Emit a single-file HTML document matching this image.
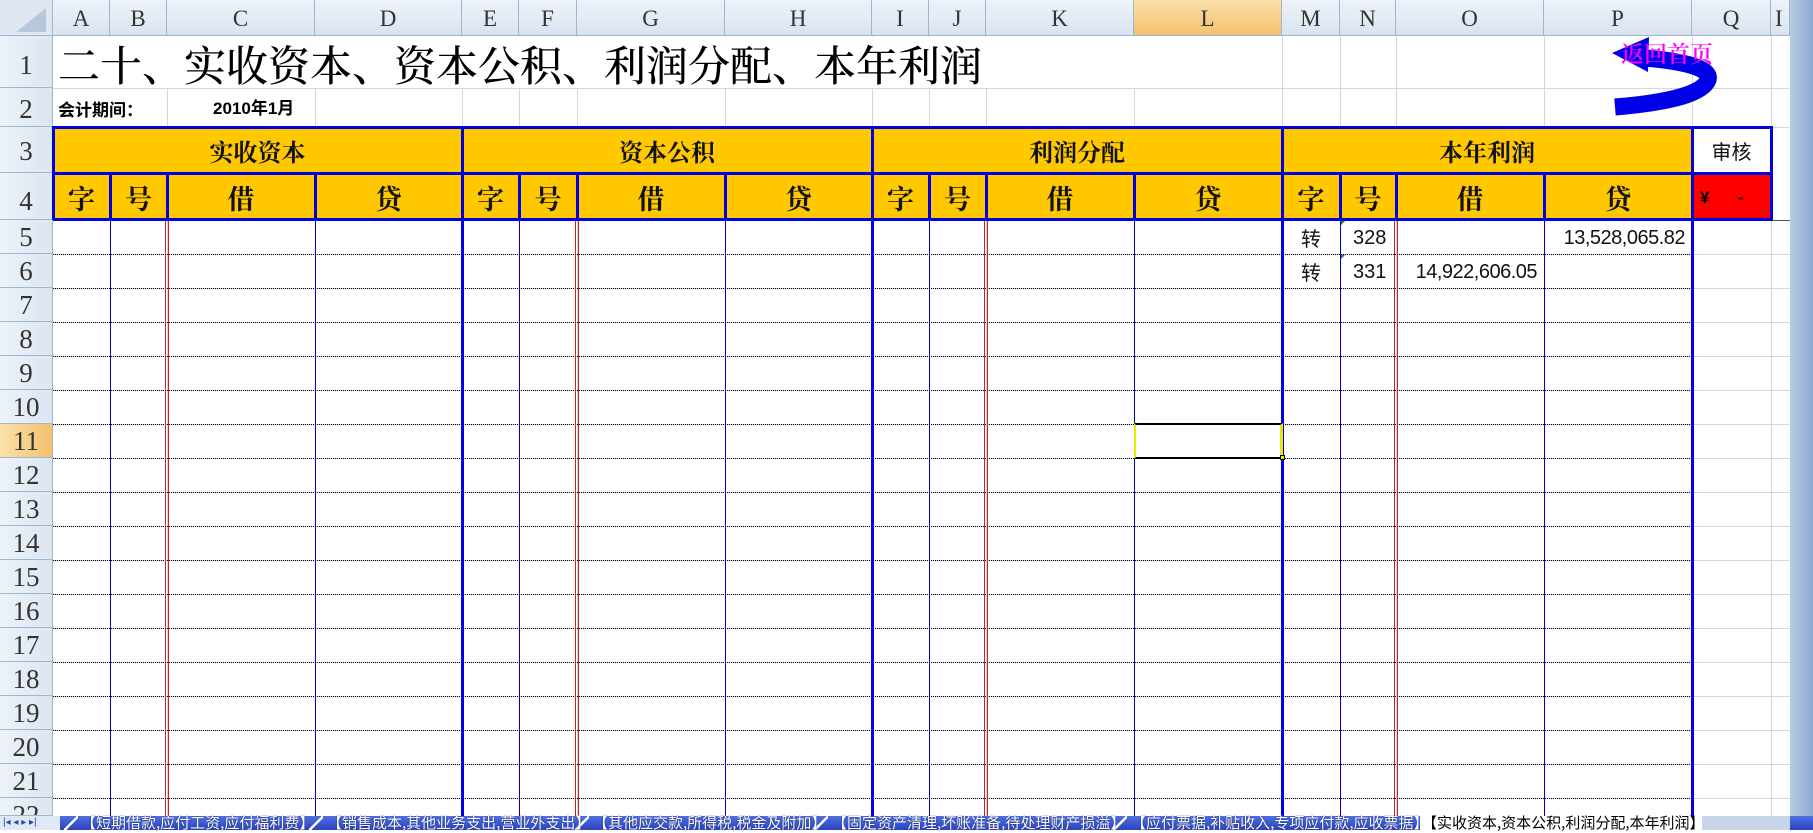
<!DOCTYPE html>
<html><head><meta charset="utf-8"><style>
*{margin:0;padding:0;box-sizing:border-box}
body{width:1813px;height:830px;overflow:hidden;background:#fff;position:relative;font-family:"Liberation Sans","Noto Sans CJK SC",sans-serif}
div{position:absolute}
.ch{top:0;height:36px;background:linear-gradient(#eef3fa,#d9e3f0);border-right:1px solid #9eb6ce;border-bottom:1px solid #9eb6ce;font-family:"Liberation Serif",serif;font-size:23px;color:#333;text-align:center;line-height:38px}
.rh{left:0;width:53px;background:linear-gradient(90deg,#eef3fa,#dbe5f1);border-right:1px solid #9eb6ce;border-bottom:1px solid #9eb6ce;font-family:"Liberation Serif",serif;font-size:27px;color:#333;text-align:center}
.gv{top:36px;height:780px;width:1px;background:#d0d7e5}
.gh{left:53px;width:1737px;height:1px;background:#d0d7e5}
.dh{left:53px;width:1639px;height:0;border-top:1px dotted #000}
.tb{width:1px;background:#0000c8;top:220px;height:596px}
.rd{width:4px;border-left:1px solid #d02020;border-right:1px solid #d02020;top:220px;height:596px}
.bb{background:#0000e0}
.y{background:#ffc800}
.h3{top:130px;height:42px;font-family:"Noto Serif CJK SC",serif;font-weight:700;font-size:24px;text-align:center;line-height:42px;color:#111}
.h4{top:176px;height:43px;font-family:"Noto Serif CJK SC",serif;font-weight:700;font-size:27px;text-align:center;line-height:43px;color:#111}
.n{font-size:20px;color:#111;height:34px;line-height:34px}
.tab{top:815px;height:15px;color:#fff;font-size:15px;line-height:15px;white-space:nowrap;font-family:"Noto Sans CJK SC",sans-serif;text-shadow:0 0 1px #002}
.sl{top:816px;width:14px;height:14px;background:linear-gradient(135deg,transparent 45%,#fff 45%,#fff 58%,transparent 58%)}
</style></head><body>
<div style="left:0;top:0;width:53px;height:36px;background:#dfe7f2;border-right:1px solid #9eb6ce;border-bottom:1px solid #9eb6ce"></div>
<div style="left:16px;top:8px;width:0;height:0;border-left:30px solid transparent;border-bottom:24px solid #b8c8dc"></div>
<div class="ch" style="left:53px;width:57px">A</div>
<div class="ch" style="left:110px;width:57px">B</div>
<div class="ch" style="left:167px;width:148px">C</div>
<div class="ch" style="left:315px;width:147px">D</div>
<div class="ch" style="left:462px;width:57px">E</div>
<div class="ch" style="left:519px;width:58px">F</div>
<div class="ch" style="left:577px;width:148px">G</div>
<div class="ch" style="left:725px;width:147px">H</div>
<div class="ch" style="left:872px;width:57px">I</div>
<div class="ch" style="left:929px;width:57px">J</div>
<div class="ch" style="left:986px;width:148px">K</div>
<div class="ch" style="left:1134px;width:148px;background:linear-gradient(#fbe0a8,#f4c170)">L</div>
<div class="ch" style="left:1282px;width:58px">M</div>
<div class="ch" style="left:1340px;width:56px">N</div>
<div class="ch" style="left:1396px;width:148px">O</div>
<div class="ch" style="left:1544px;width:148px">P</div>
<div class="ch" style="left:1692px;width:79px">Q</div>
<div class="ch" style="left:1771px;width:19px;text-align:left;padding-left:4px">I</div>
<div class="rh" style="top:36px;height:52px;line-height:58px">1</div>
<div class="rh" style="top:88px;height:39px;line-height:42px">2</div>
<div class="rh" style="top:127px;height:46px;line-height:48px">3</div>
<div class="rh" style="top:173px;height:47px;line-height:56px">4</div>
<div class="rh" style="top:220px;height:34px;line-height:34px">5</div>
<div class="rh" style="top:254px;height:34px;line-height:34px">6</div>
<div class="rh" style="top:288px;height:34px;line-height:34px">7</div>
<div class="rh" style="top:322px;height:34px;line-height:34px">8</div>
<div class="rh" style="top:356px;height:34px;line-height:34px">9</div>
<div class="rh" style="top:390px;height:34px;line-height:34px">10</div>
<div class="rh" style="top:424px;height:34px;line-height:34px;background:linear-gradient(90deg,#fbe0a8,#f4c170)">11</div>
<div class="rh" style="top:458px;height:34px;line-height:34px">12</div>
<div class="rh" style="top:492px;height:34px;line-height:34px">13</div>
<div class="rh" style="top:526px;height:34px;line-height:34px">14</div>
<div class="rh" style="top:560px;height:34px;line-height:34px">15</div>
<div class="rh" style="top:594px;height:34px;line-height:34px">16</div>
<div class="rh" style="top:628px;height:34px;line-height:34px">17</div>
<div class="rh" style="top:662px;height:34px;line-height:34px">18</div>
<div class="rh" style="top:696px;height:34px;line-height:34px">19</div>
<div class="rh" style="top:730px;height:34px;line-height:34px">20</div>
<div class="rh" style="top:764px;height:34px;line-height:34px">21</div>
<div class="rh" style="top:798px;height:18px;line-height:34px;overflow:hidden">22</div>
<div class="gv" style="left:110px"></div><div class="gv" style="left:167px"></div><div class="gv" style="left:315px"></div><div class="gv" style="left:462px"></div><div class="gv" style="left:519px"></div><div class="gv" style="left:577px"></div><div class="gv" style="left:725px"></div><div class="gv" style="left:872px"></div><div class="gv" style="left:929px"></div><div class="gv" style="left:986px"></div><div class="gv" style="left:1134px"></div><div class="gv" style="left:1282px"></div><div class="gv" style="left:1340px"></div><div class="gv" style="left:1396px"></div><div class="gv" style="left:1544px"></div><div class="gv" style="left:1692px"></div><div class="gv" style="left:1771px"></div>
<div class="gh" style="top:88px"></div><div class="gh" style="top:127px"></div>
<div class="gh" style="top:254px"></div><div class="gh" style="top:288px"></div><div class="gh" style="top:322px"></div><div class="gh" style="top:356px"></div><div class="gh" style="top:390px"></div><div class="gh" style="top:424px"></div><div class="gh" style="top:458px"></div><div class="gh" style="top:492px"></div><div class="gh" style="top:526px"></div><div class="gh" style="top:560px"></div><div class="gh" style="top:594px"></div><div class="gh" style="top:628px"></div><div class="gh" style="top:662px"></div><div class="gh" style="top:696px"></div><div class="gh" style="top:730px"></div><div class="gh" style="top:764px"></div><div class="gh" style="top:798px"></div>
<div style="left:54px;top:37px;width:1228px;height:51px;background:#fff"></div>
<div style="left:58px;top:36px;height:52px;line-height:56px;font-family:'Noto Serif CJK SC',serif;font-weight:500;font-size:42px;color:#000;white-space:nowrap">二十、实收资本、资本公积、利润分配、本年利润</div>
<div style="left:58px;top:89px;height:38px;line-height:40px;font-weight:700;font-size:17px;font-family:'Noto Sans CJK SC',sans-serif;background:#fff;width:108px">会计期间：</div>
<div style="left:168px;top:89px;height:38px;line-height:40px;font-weight:700;font-size:17px;width:146px;background:#fff;padding-left:45px;white-space:nowrap">2010年1月</div>
<svg style="position:absolute;left:0;top:0" width="1813" height="830">
<path d="M1615 107 Q1700 100 1708 80 Q1713 64 1645 58" fill="none" stroke="#0000e6" stroke-width="17"/>
<polygon points="1612,53 1649,37 1648,72" fill="#0000e6"/>
</svg>
<div style="left:1621px;top:40px;font-family:'Noto Serif CJK SC',serif;font-size:23px;color:#ff00ff;font-weight:600;white-space:nowrap;line-height:26px">返回首页</div>
<div class="y" style="left:53px;top:127px;width:1639px;height:93px"></div>
<div style="left:1692px;top:173px;width:79px;height:47px;background:#ff0000"></div>
<div class="h3" style="left:53px;width:409px">实收资本</div>
<div class="h3" style="left:462px;width:410px">资本公积</div>
<div class="h3" style="left:872px;width:410px">利润分配</div>
<div class="h3" style="left:1282px;width:410px">本年利润</div>
<div class="h3" style="left:1692px;width:79px;font-weight:400;font-size:20px;font-family:'Noto Sans CJK SC',sans-serif">审核</div>
<div style="left:1700px;top:176px;height:43px;line-height:43px;font-size:17px;font-weight:700;color:#000">¥&nbsp;&nbsp;&nbsp;&nbsp;&nbsp;&nbsp;-</div>
<div class="h4" style="left:53px;width:57px">字</div><div class="h4" style="left:110px;width:57px">号</div><div class="h4" style="left:167px;width:148px">借</div><div class="h4" style="left:315px;width:147px">贷</div>
<div class="h4" style="left:462px;width:57px">字</div><div class="h4" style="left:519px;width:58px">号</div><div class="h4" style="left:577px;width:148px">借</div><div class="h4" style="left:725px;width:147px">贷</div>
<div class="h4" style="left:872px;width:57px">字</div><div class="h4" style="left:929px;width:57px">号</div><div class="h4" style="left:986px;width:148px">借</div><div class="h4" style="left:1134px;width:148px">贷</div>
<div class="h4" style="left:1282px;width:58px">字</div><div class="h4" style="left:1340px;width:56px">号</div><div class="h4" style="left:1396px;width:148px">借</div><div class="h4" style="left:1544px;width:148px">贷</div>
<div class="dh" style="top:254px"></div><div class="dh" style="top:288px"></div><div class="dh" style="top:322px"></div><div class="dh" style="top:356px"></div><div class="dh" style="top:390px"></div><div class="dh" style="top:424px"></div><div class="dh" style="top:458px"></div><div class="dh" style="top:492px"></div><div class="dh" style="top:526px"></div><div class="dh" style="top:560px"></div><div class="dh" style="top:594px"></div><div class="dh" style="top:628px"></div><div class="dh" style="top:662px"></div><div class="dh" style="top:696px"></div><div class="dh" style="top:730px"></div><div class="dh" style="top:764px"></div><div class="dh" style="top:798px"></div>
<div class="tb" style="left:110px"></div><div class="tb" style="left:315px"></div><div class="tb" style="left:519px"></div><div class="tb" style="left:725px"></div><div class="tb" style="left:929px"></div><div class="tb" style="left:1134px"></div><div class="tb" style="left:1340px"></div><div class="tb" style="left:1544px"></div>
<div class="rd" style="left:165px"></div><div class="rd" style="left:575px"></div><div class="rd" style="left:984px"></div><div class="rd" style="left:1394px"></div>
<div style="left:53px;top:220px;width:1760px;height:1px;background:#555"></div>
<div class="bb" style="left:53px;top:126px;width:1720px;height:3px"></div>
<div class="bb" style="left:53px;top:172px;width:1720px;height:3px"></div>
<div class="bb" style="left:53px;top:218px;width:1720px;height:3px"></div>
<div class="bb" style="left:52px;top:126px;width:3px;height:94px"></div>
<div class="bb" style="left:1770px;top:126px;width:3px;height:94px"></div>
<div class="bb" style="left:461px;top:126px;width:3px;height:690px"></div>
<div class="bb" style="left:871px;top:126px;width:3px;height:690px"></div>
<div class="bb" style="left:1281px;top:126px;width:3px;height:690px"></div>
<div class="bb" style="left:1691px;top:126px;width:3px;height:690px"></div>
<div class="bb" style="left:109px;top:173px;width:3px;height:47px"></div><div class="bb" style="left:166px;top:173px;width:3px;height:47px"></div><div class="bb" style="left:314px;top:173px;width:3px;height:47px"></div>
<div class="bb" style="left:518px;top:173px;width:3px;height:47px"></div><div class="bb" style="left:576px;top:173px;width:3px;height:47px"></div><div class="bb" style="left:724px;top:173px;width:3px;height:47px"></div>
<div class="bb" style="left:928px;top:173px;width:3px;height:47px"></div><div class="bb" style="left:985px;top:173px;width:3px;height:47px"></div><div class="bb" style="left:1133px;top:173px;width:3px;height:47px"></div>
<div class="bb" style="left:1339px;top:173px;width:3px;height:47px"></div><div class="bb" style="left:1395px;top:173px;width:3px;height:47px"></div><div class="bb" style="left:1543px;top:173px;width:3px;height:47px"></div>
<div class="n" style="left:1282px;top:221px;width:58px;text-align:center;font-family:'Noto Sans CJK SC',sans-serif">转</div>
<div class="n" style="left:1282px;top:255px;width:58px;text-align:center;font-family:'Noto Sans CJK SC',sans-serif">转</div>
<div class="n" style="left:1353px;top:221px">328</div>
<div class="n" style="left:1353px;top:255px">331</div>
<div class="n" style="left:1544px;top:221px;width:141px;text-align:right;letter-spacing:-0.5px">13,528,065.82</div>
<div class="n" style="left:1396px;top:255px;width:141px;text-align:right;letter-spacing:-0.5px">14,922,606.05</div>
<div style="left:1341px;top:221px;width:0;height:0;border-top:4px solid #208020;border-right:4px solid transparent"></div>
<div style="left:1341px;top:255px;width:0;height:0;border-top:4px solid #208020;border-right:4px solid transparent"></div>
<div style="left:1134px;top:423px;width:149px;height:36px;border:2px solid #000;border-left-color:#e8e800;border-right:3px solid #e8e800"></div>
<div style="left:1280px;top:455px;width:5px;height:5px;background:#e8e800;border:1px solid #000"></div>
<div style="left:1790px;top:0;width:23px;height:816px;background:linear-gradient(90deg,#b8cce4,#8eaad0)"></div>
<div style="left:0;top:816px;width:1813px;height:14px;background:linear-gradient(#4e6fe0,#2a43c0)"></div>
<div style="left:0;top:816px;width:60px;height:14px;background:#dfe8f5;color:#2a4aa0;font-size:10px;line-height:14px;padding-left:3px">|◂ ◂ ▸ ▸|</div>
<div class="sl" style="left:64px"></div><div class="sl" style="left:309px"></div><div class="sl" style="left:575px"></div><div class="sl" style="left:814px"></div><div class="sl" style="left:1113px"></div>
<div class="tab" style="left:81px">【短期借款,应付工资,应付福利费】</div>
<div class="tab" style="left:327px">【销售成本,其他业务支出,营业外支出】</div>
<div class="tab" style="left:593px">【其他应交款,所得税,税金及附加】</div>
<div class="tab" style="left:832px">【固定资产清理,坏账准备,待处理财产损溢】</div>
<div class="tab" style="left:1131px">【应付票据,补贴收入,专项应付款,应收票据】</div>
<div style="left:1420px;top:816px;width:282px;height:14px;background:#fff"></div>
<div class="tab" style="left:1422px;color:#000;text-shadow:none">【实收资本,资本公积,利润分配,本年利润】</div>
<div style="left:1702px;top:816px;width:88px;height:14px;background:#c8d6ea"></div>
</body></html>
